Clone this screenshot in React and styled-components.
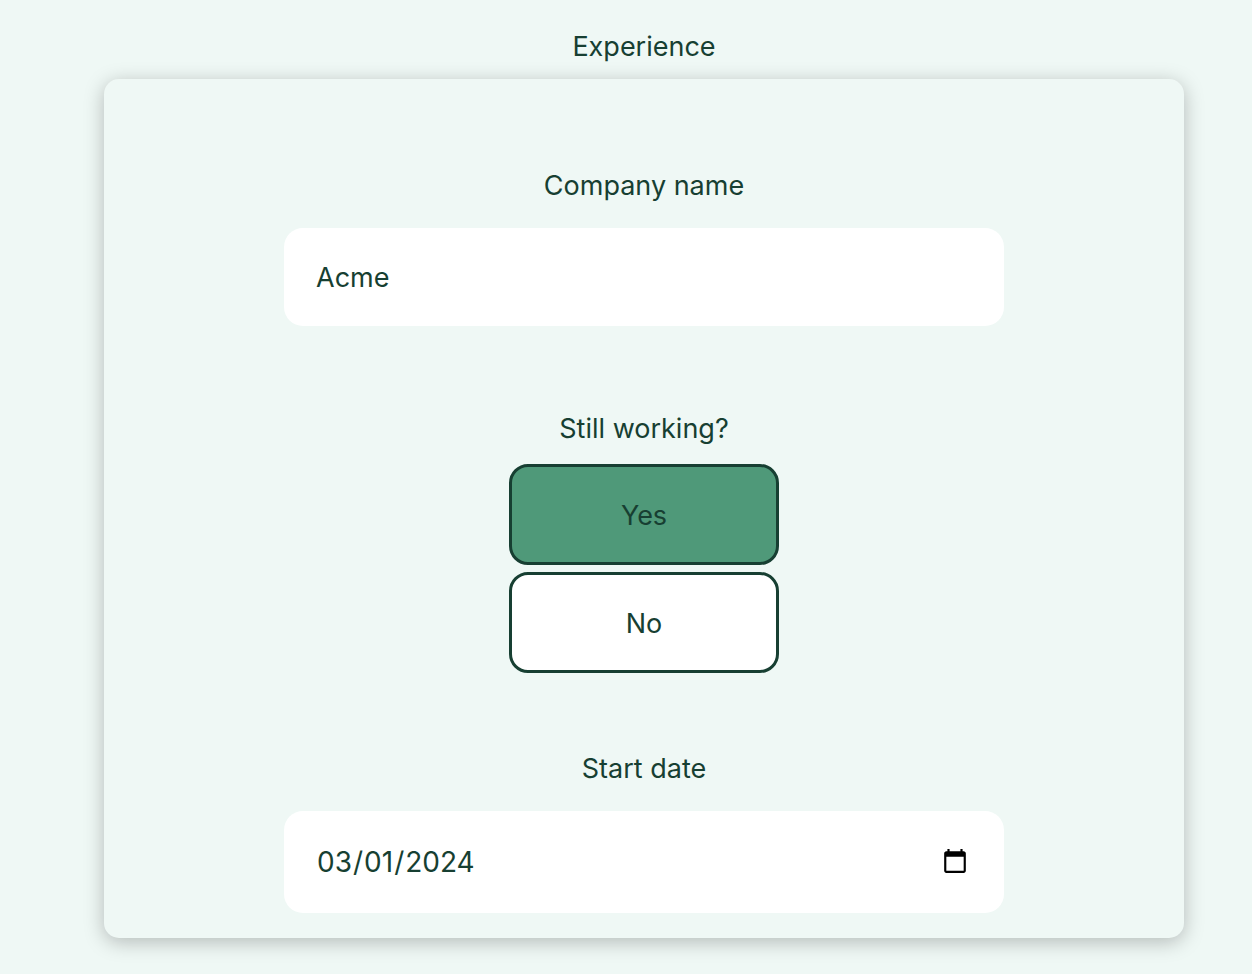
import React, { useState } from "react";
import styled, { createGlobalStyle } from "styled-components";

const ink = "#173f32";
const mint = "#eff8f5";

const GlobalStyle = createGlobalStyle`
  *, *::before, *::after { box-sizing: border-box; }
  body {
    margin: 0;
    background: ${mint};
    color: ${ink};
    font-family: Inter, "Liberation Sans", sans-serif;
    font-size: 27px;
    line-height: 34px;
  }
`;

const Page = styled.main`
  display: flex;
  flex-direction: column;
  gap: 15px;
  padding: 30px 68px 36px 104px;
`;

const Title = styled.h1`
  margin: 0;
  font-size: 27px;
  font-weight: 400;
  text-align: center;
`;

const Card = styled.form`
  display: flex;
  flex-direction: column;
  align-items: center;
  padding: 90px 32px 25px;
  border-radius: 15px;
  background: ${mint};
  box-shadow: 0 4px 20px rgba(0, 0, 0, 0.25);
`;

const Field = styled.div`
  display: flex;
  flex-direction: column;
  align-items: center;
  gap: ${(p) => (p.$tight ? 18 : 25)}px;
  width: 100%;
  max-width: 720px;
  margin-bottom: ${(p) => p.$after || 0}px;
`;

const Label = styled.label`
  text-align: center;
`;

const Input = styled.input`
  width: 100%;
  padding: 33px 32px 31px;
  border: 0;
  border-radius: 19px;
  background: #fff;
  color: ${ink};
  font: inherit;
  outline: none;
`;

const DateInput = styled(Input)`
  height: 102px;
  padding: 32px 33px 32px 32px;
  font-size: 28px;

  &::-webkit-calendar-picker-indicator {
    cursor: pointer;
  }
`;

const Choices = styled.div`
  display: flex;
  flex-direction: column;
  gap: 7px;
  width: 270px;
`;

const Choice = styled.button`
  height: 101px;
  padding: 2px 0 0;
  border: 3px solid ${ink};
  border-radius: 19px;
  background: ${(p) => (p.$selected ? "#4f9979" : "#fff")};
  color: ${ink};
  font: inherit;
  cursor: pointer;
`;

export default function App() {
  const [company, setCompany] = useState("Acme");
  const [working, setWorking] = useState("Yes");
  const [start, setStart] = useState("2024-03-01");

  return (
    <>
      <GlobalStyle />
      <Page>
        <Title>Experience</Title>
        <Card>
          <Field $after={86}>
            <Label htmlFor="company">Company name</Label>
            <Input
              id="company"
              type="text"
              value={company}
              onChange={(e) => setCompany(e.target.value)}
            />
          </Field>
          <Field $tight $after={79} role="group" aria-labelledby="working">
            <Label as="span" id="working">Still working?</Label>
            <Choices>
              {["Yes", "No"].map((option) => (
                <Choice
                  key={option}
                  type="button"
                  $selected={working === option}
                  aria-pressed={working === option}
                  onClick={() => setWorking(option)}
                >
                  {option}
                </Choice>
              ))}
            </Choices>
          </Field>
          <Field>
            <Label htmlFor="start">Start date</Label>
            <DateInput
              id="start"
              type="date"
              value={start}
              onChange={(e) => setStart(e.target.value)}
            />
          </Field>
        </Card>
      </Page>
    </>
  );
}
